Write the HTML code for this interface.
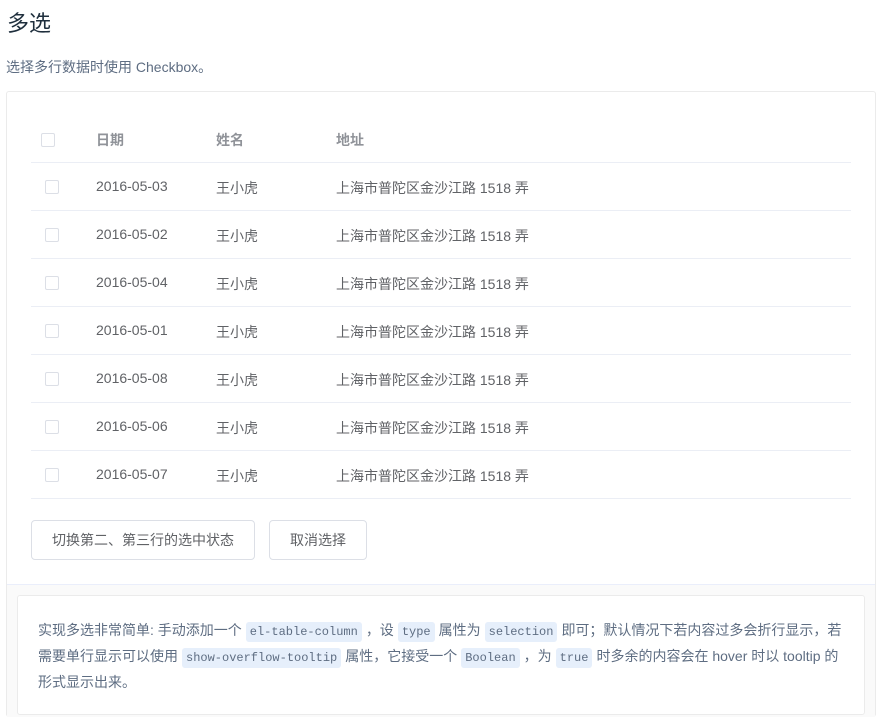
<!DOCTYPE html>
<html><head><meta charset="utf-8"><style>
*{box-sizing:border-box;margin:0;padding:0}
html,body{width:876px;height:717px;overflow:hidden}
body{background:#fff;font-family:"Liberation Sans","Noto Sans CJK SC",sans-serif;color:#5e6d82;position:relative}
h3{position:absolute;left:7px;top:6px;font-size:22px;font-weight:400;color:#1f2f3d}
.desc{position:absolute;left:6px;top:57px;font-size:14px;color:#5e6d82}
.demo{position:absolute;left:6px;top:91px;width:870px;height:626px;border:1px solid #ebebeb;border-bottom:none;border-radius:3px}
.row{position:absolute;left:31px;width:820px;height:48px;border-bottom:1px solid #ebeef5;font-size:14px;color:#606266}
.row span{position:absolute;top:15px}
.cb{position:absolute;width:14px;height:14px;border:1px solid #dcdfe6;border-radius:2px;background:#fff}
.hd{color:#909399;font-weight:bold}
.btn{position:absolute;top:520px;height:40px;border:1px solid #dcdfe6;border-radius:4px;font-size:14px;color:#606266;text-align:center;line-height:38px;background:#fff}
.meta{position:absolute;left:7px;top:584px;width:868px;height:133px;background:#fafafa;border-top:1px solid #eaeefb}
.inner{position:absolute;left:17px;top:595px;width:848px;height:120px;background:#fff;border:1px solid #ebebeb;border-radius:3px;padding:21px 20px;font-size:14px;line-height:26px;color:#5e6d82}
code{font-family:"Liberation Mono",monospace;font-size:12px;line-height:16px;background:#e6effb;color:#5e6d82;padding:3px 4px;border-radius:3px;margin:0 4px}
</style></head><body>
<h3>多选</h3>
<div class="desc">选择多行数据时使用 Checkbox。</div>
<div class="demo"></div>
<div class="row hd" style="top:115px"><div class="cb" style="left:10px;top:18px"></div><span style="left:65px">日期</span><span style="left:185px">姓名</span><span style="left:305px">地址</span></div>
<div class="row" style="top:163px"><div class="cb" style="left:14px;top:17px"></div><span style="left:65px">2016-05-03</span><span style="left:185px">王小虎</span><span style="left:305px">上海市普陀区金沙江路 1518 弄</span></div>
<div class="row" style="top:211px"><div class="cb" style="left:14px;top:17px"></div><span style="left:65px">2016-05-02</span><span style="left:185px">王小虎</span><span style="left:305px">上海市普陀区金沙江路 1518 弄</span></div>
<div class="row" style="top:259px"><div class="cb" style="left:14px;top:17px"></div><span style="left:65px">2016-05-04</span><span style="left:185px">王小虎</span><span style="left:305px">上海市普陀区金沙江路 1518 弄</span></div>
<div class="row" style="top:307px"><div class="cb" style="left:14px;top:17px"></div><span style="left:65px">2016-05-01</span><span style="left:185px">王小虎</span><span style="left:305px">上海市普陀区金沙江路 1518 弄</span></div>
<div class="row" style="top:355px"><div class="cb" style="left:14px;top:17px"></div><span style="left:65px">2016-05-08</span><span style="left:185px">王小虎</span><span style="left:305px">上海市普陀区金沙江路 1518 弄</span></div>
<div class="row" style="top:403px"><div class="cb" style="left:14px;top:17px"></div><span style="left:65px">2016-05-06</span><span style="left:185px">王小虎</span><span style="left:305px">上海市普陀区金沙江路 1518 弄</span></div>
<div class="row" style="top:451px"><div class="cb" style="left:14px;top:17px"></div><span style="left:65px">2016-05-07</span><span style="left:185px">王小虎</span><span style="left:305px">上海市普陀区金沙江路 1518 弄</span></div>
<div class="btn" style="left:31px;width:224px">切换第二、第三行的选中状态</div>
<div class="btn" style="left:269px;width:98px">取消选择</div>
<div class="meta"></div>
<div class="inner">实现多选非常简单: 手动添加一个<code>el-table-column</code>，设<code>type</code>属性为<code>selection</code>即可；默认情况下若内容过多会折行显示，若需要单行显示可以使用<code>show-overflow-tooltip</code>属性，它接受一个<code>Boolean</code>，为<code>true</code>时多余的内容会在 hover 时以 tooltip 的形式显示出来。</div>
</body></html>
